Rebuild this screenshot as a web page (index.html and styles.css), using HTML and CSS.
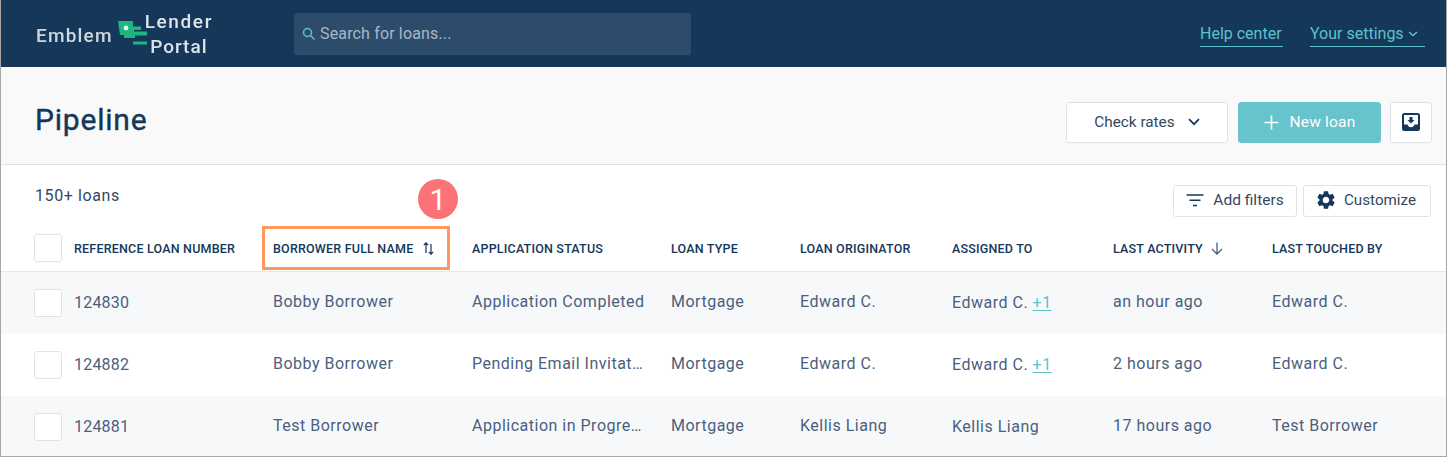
FILE: index.html
```html
<!DOCTYPE html>
<html lang="en">
<head>
<meta charset="utf-8">
<title>Pipeline</title>
<link rel="stylesheet" href="styles.css">
</head>
<body>
<div class="app">
  <header class="topbar">
    <div class="logo">
      <span class="logo-emblem">Emblem</span>
      <svg class="logo-mark" width="30" height="25" viewBox="0 0 30 25">
        <path d="M0 0H15V5.500H23V9H16V10.500H29V14.500H17V17H6V14H2z" fill="#1fb57f"/>
        <circle cx="8" cy="7" r="2.400" fill="#e2f8ee"/>
        <rect x="15" y="20.500" width="14" height="3" fill="#1fb57f"/>
      </svg>
      <span class="logo-portal"><span class="word-lender">Lender</span><span class="word-portal">Portal</span></span>
    </div>
    <div class="search">
      <svg width="14" height="14" viewBox="0 0 14 14" fill="none" stroke="#5cc3cd" stroke-width="1.500"><circle cx="5.500" cy="5.500" r="4"/><path d="M8.500 8.500l4 4"/></svg>
      <span>Search for loans...</span>
    </div>
    <nav class="toplinks">
      <a class="toplink link-help">Help center</a>
      <a class="toplink link-settings"><span>Your settings</span><svg width="10" height="6" viewBox="0 0 10 6" fill="none" stroke="#5cc3cd" stroke-width="1.500"><path d="M1 1l4 3.500L9 1"/></svg></a>
    </nav>
  </header>

  <section class="pagehead">
    <h1>Pipeline</h1>
    <div class="actions">
      <button class="btn btn-rates">Check rates
        <svg width="12" height="8" viewBox="0 0 12 8" fill="none" stroke="#14375a" stroke-width="1.700"><path d="M1 1.200l5 5 5-5"/></svg>
      </button>
      <button class="btn btn-new">
        <svg width="15" height="15" viewBox="0 0 15 15" fill="none" stroke="#fff" stroke-width="1.600"><path d="M7.500.5v14M.5 7.500h14"/></svg>
        New loan
      </button>
      <button class="btn btn-icon" aria-label="Download">
        <svg width="18" height="18" viewBox="0 0 18 18"><path d="M2.500 0h13A2.500 2.500 0 0 1 18 2.500v13a2.500 2.500 0 0 1-2.500 2.500h-13A2.500 2.500 0 0 1 0 15.500v-13A2.500 2.500 0 0 1 2.500 0z" fill="#14375a"/><path d="M2 2h14v9.500h-3.500c-.5 1.800-1.800 2.800-3.500 2.800s-3-1-3.500-2.800H2z" fill="#fff"/><path d="M7.500 4h3v3h2L9 10.500 5.500 7h2z" fill="#14375a"/></svg>
      </button>
    </div>
  </section>

  <section class="toolbar">
    <span class="count">150+ loans</span>
    <div class="tools">
      <button class="btn btn-tool btn-filters">
        <svg width="18" height="13" viewBox="0 0 18 13" fill="none" stroke="#14375a" stroke-width="1.500"><path d="M.5 1h17M3.500 6.200h11M7 11.500h4"/></svg>
        Add filters
      </button>
      <button class="btn btn-tool btn-custom">
        <svg width="22" height="22" viewBox="0 0 24 24"><path fill="#14375a" d="M19.140 12.940c.04-.3.060-.61.060-.94 0-.32-.02-.64-.07-.94l2.030-1.580a.49.490 0 0 0 .12-.61l-1.920-3.320a.488.488 0 0 0-.59-.22l-2.390.96c-.5-.38-1.030-.7-1.620-.94l-.36-2.540a.484.484 0 0 0-.48-.41h-3.840c-.24 0-.43.17-.47.41l-.36 2.540c-.59.24-1.130.57-1.620.94l-2.390-.96c-.22-.08-.47 0-.59.22L2.740 8.870c-.12.21-.08.47.12.61l2.030 1.580c-.05.3-.09.63-.09.94s.02.64.07.94l-2.030 1.580a.49.490 0 0 0-.12.61l1.920 3.320c.12.22.37.29.59.22l2.390-.96c.5.38 1.030.7 1.620.94l.36 2.540c.05.24.24.41.48.41h3.840c.24 0 .44-.17.47-.41l.36-2.540c.59-.24 1.130-.56 1.620-.94l2.390.96c.22.08.47 0 .59-.22l1.920-3.320c.12-.22.07-.47-.12-.61l-2.010-1.580zM12 15.600A3.610 3.610 0 0 1 8.400 12c0-1.980 1.620-3.600 3.600-3.600s3.600 1.620 3.600 3.600-1.620 3.600-3.600 3.600z"/></svg>
        Customize
      </button>
    </div>
  </section>

  <section class="table">
    <div class="row row-head">
      <span class="check"></span>
      <span>REFERENCE LOAN NUMBER</span>
      <span class="sorted">BORROWER FULL NAME
        <svg class="sort-both" width="11" height="13" viewBox="0 0 11 13" fill="none" stroke="#14375a" stroke-width="1.200"><path d="M3 11V1M.8 3.200L3 .8l2.200 2.400M8 2v10M5.800 9.800L8 12.200l2.200-2.400"/></svg>
      </span>
      <span>APPLICATION STATUS</span>
      <span>LOAN TYPE</span>
      <span>LOAN ORIGINATOR</span>
      <span>ASSIGNED TO</span>
      <span class="sorted">LAST ACTIVITY
        <svg class="sort-down" width="12" height="13" viewBox="0 0 12 13" fill="none" stroke="#4a5f7e" stroke-width="1.300"><path d="M6 .5v11.500M1 7l5 5 5-5"/></svg>
      </span>
      <span>LAST TOUCHED BY</span>
    </div>
    <div class="row row-body row-tint">
      <span class="check"></span><span class="num">124830</span><span>Bobby Borrower</span><span>Application Completed</span><span>Mortgage</span><span>Edward C.</span>
      <span class="assigned">Edward C. <a class="plus">+1</a></span><span>an hour ago</span><span>Edward C.</span>
    </div>
    <div class="row row-body">
      <span class="check"></span><span class="num">124882</span><span>Bobby Borrower</span><span>Pending Email Invitat…</span><span>Mortgage</span><span>Edward C.</span>
      <span class="assigned">Edward C. <a class="plus">+1</a></span><span>2 hours ago</span><span>Edward C.</span>
    </div>
    <div class="row row-body row-tint">
      <span class="check"></span><span class="num">124881</span><span>Test Borrower</span><span>Application in Progre…</span><span>Mortgage</span><span>Kellis Liang</span>
      <span class="assigned">Kellis Liang</span><span>17 hours ago</span><span>Test Borrower</span>
    </div>
  </section>

  <div class="highlight"></div>
  <div class="badge">1</div>
</div>
</body>
</html>
```
FILE: styles.css
```css
* { box-sizing: border-box; }
html, body { margin: 0; padding: 0; height: 100%; }
body { font-family: Roboto, "Liberation Sans", sans-serif; background: #fff; overflow: hidden; }
.app {
  position: relative;
  width: 1447px;
  height: 457px;
  border-left: 1px solid #a6a6a6;
  border-right: 1px solid #a6a6a6;
  border-bottom: 1px solid #a6a6a6;
  overflow: hidden;
}
.topbar {
  height: 67px;
  margin: 0 -1px;
  background: #14375a;
  display: flex;
  align-items: center;
  padding-left: 36px;
}
.logo { display: flex; align-items: center; width: 258px; color: #dfe4e9; font-weight: 500; filter: blur(.35px); }
.logo-emblem { font-size: 19px; letter-spacing: 1.200px; margin-top: 3px; opacity: .92; }
.logo-mark { margin-left: 5px; flex: none; }
.logo-portal { display: flex; flex-direction: column; align-items: center; font-size: 19px; line-height: 25px; margin-left: -3px; }
.word-lender { letter-spacing: 1.600px; }
.word-portal { letter-spacing: 1px; }
.search {
  width: 397px;
  height: 42px;
  background: #2d4c6c;
  border-radius: 3px;
  display: flex;
  align-items: center;
  gap: 4px;
  padding-left: 8px;
  color: #a9b7c5;
  font-size: 16px;
  letter-spacing: .15px;
}
.toplinks { margin-left: auto; display: flex; gap: 27px; padding-right: 22px; margin-top: 1px; }
.toplink {
  color: #5cc3cd;
  font-size: 16px;
  line-height: 24px;
  border-bottom: 1px solid #5cc3cd;
  display: flex;
  align-items: center;
  height: 26px;
  padding-top: 1px;
  white-space: nowrap;
}
.link-help { width: 83px; }
.link-settings { width: 115px; gap: 4px; }
.pagehead {
  height: 98px;
  background: #f9f9f9;
  border-bottom: 1px solid #dfe3e8;
  display: flex;
  align-items: center;
  justify-content: space-between;
  padding: 12px 14px 0 34px;
}
.pagehead h1 { margin: 0 0 4px; font-size: 30px; font-weight: 400; color: #14375a; letter-spacing: .8px; -webkit-text-stroke: .4px #14375a; }
.actions { display: flex; gap: 10px; margin-top: 1px; }
.btn {
  font-family: inherit;
  background: #fff;
  border: 1px solid #dfe3e8;
  border-radius: 3px;
  color: #33475f;
  display: flex;
  align-items: center;
  justify-content: center;
  padding: 0;
}
.btn-rates { width: 162px; height: 41px; font-size: 15.300px; gap: 13px; }
.btn-new { width: 143px; height: 41px; background: #67c4cc; border-color: #67c4cc; color: #fff; font-size: 15.500px; gap: 11px; font-weight: 400; letter-spacing: .2px; margin-right: -1px; }
.btn-icon { width: 42px; height: 41px; }
.toolbar {
  height: 61px;
  display: flex;
  justify-content: space-between;
  align-items: flex-start;
  padding: 20px 15px 0 34px;
}
.count { font-size: 16px; color: #33475f; letter-spacing: .6px; line-height: 22px; }
.tools { display: flex; gap: 6px; }
.btn-tool { height: 32px; font-size: 15.500px; padding-bottom: 2px; }
.btn-filters { width: 124px; gap: 9px; }
.btn-custom { width: 128px; gap: 7px; font-size: 15.200px; padding-right: 3px; }
.row {
  display: grid;
  grid-template-columns: 40px 199px 199px 199px 129px 152px 161px 159px 1fr;
  align-items: center;
  padding-left: 33px;
  white-space: nowrap;
}
.row-head {
  height: 46px;
  border-bottom: 1px solid #e6e8ec;
  font-size: 12.500px;
  font-weight: 500;
  letter-spacing: .2px;
  color: #14375a;
  padding-bottom: 1px;
}
.row-body { height: 62px; font-size: 16px; color: #4a5f7e; letter-spacing: .5px; padding-bottom: 3px; }
.row-tint { background: #f7f8fa; }
.check {
  width: 28px;
  height: 28px;
  background: #fff;
  border: 1px solid #dfe3e8;
  border-radius: 3px;
  margin-top: 3px;
}
.row-head .check { margin-top: 0; }
.num { letter-spacing: .2px; padding-top: 2px; }
.assigned { padding-top: 2px; }
.plus { color: #5cc3cd; text-decoration: underline; text-underline-offset: 2px; }
.sorted { display: flex; align-items: center; }
.sort-both { margin-left: 10px; }
.sort-down { margin-left: 8px; }
.highlight {
  position: absolute;
  left: 261px;
  top: 226px;
  width: 188px;
  height: 44px;
  border: 3px solid #ff965a;
}
.badge {
  position: absolute;
  left: 417px;
  top: 179px;
  width: 40px;
  height: 40px;
  border-radius: 50%;
  background: #fb7277;
  color: #fff;
  font-size: 30px;
  display: flex;
  align-items: center;
  justify-content: center;
}
```
